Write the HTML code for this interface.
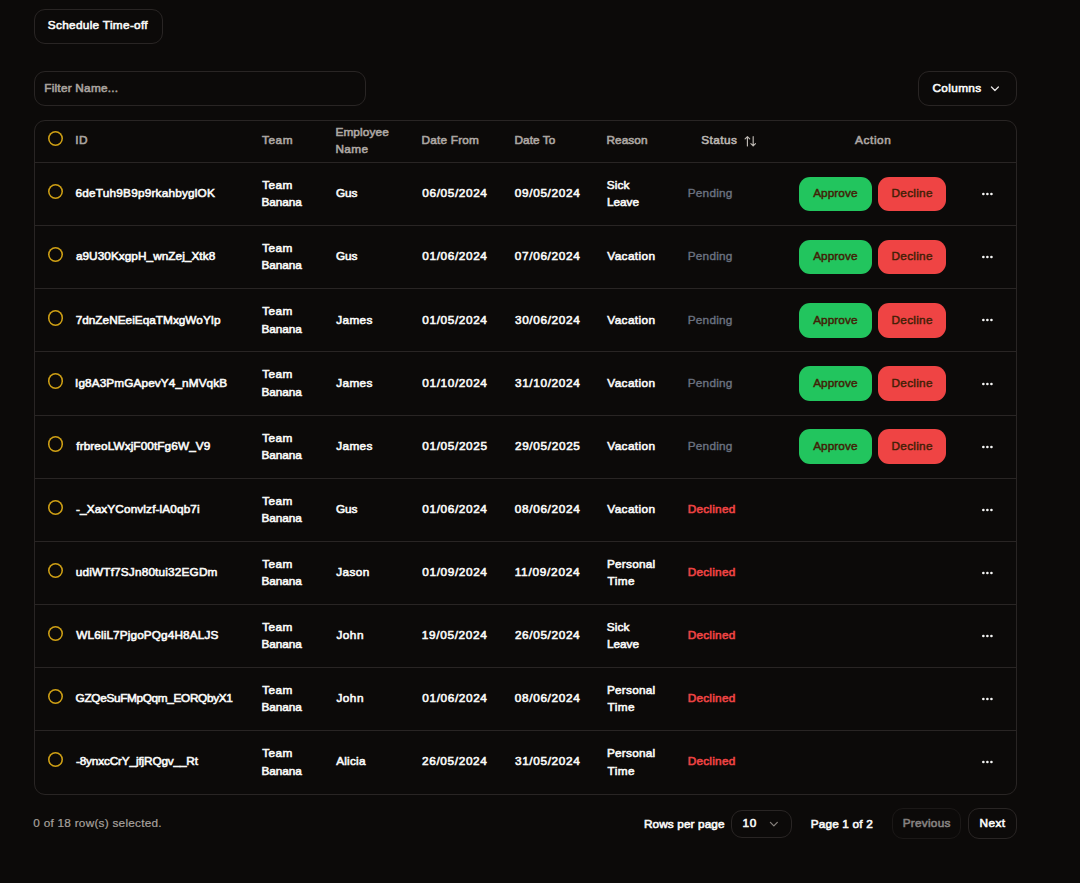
<!DOCTYPE html>
<html lang="en">
<head>
<meta charset="utf-8">
<title>Time-off requests</title>
<style>
*{box-sizing:border-box;margin:0;padding:0}
html,body{width:1080px;height:883px;overflow:hidden;background:#0c0a09}
body{position:relative;font-family:"Liberation Sans",sans-serif;font-size:11.8px;color:#fafaf9;font-weight:normal;-webkit-text-stroke:.6px currentColor}
span{white-space:nowrap}
button{font:inherit}
.btn{position:absolute;background:#0c0a09;border:1px solid #292524;border-radius:11px;color:#fafaf9;font:inherit;white-space:nowrap}
.btn>span{position:absolute;top:50%;margin-top:-.7px;transform:translateY(-50%);line-height:17px}
.sched{left:33.6px;top:8.7px;width:129.2px;height:35px}
.sched>span{left:13px;margin-top:-1.3px}
.filter{position:absolute;left:33.6px;top:70.8px;width:332.2px;height:35px;border:1px solid #292524;border-radius:11px;color:#a8a29e}
.filter>span{position:absolute;left:10px;top:50%;margin-top:.2px;transform:translateY(-50%);line-height:17px}
.cols{left:918px;top:70.8px;width:98.8px;height:35px}
.cols>span{left:13px}
.chev{position:absolute;width:13.85px;height:13.85px;fill:none;stroke:#e7e5e4;stroke-width:2.2;stroke-linecap:round;stroke-linejoin:round;top:50%;margin-top:-6.9px}
.cols .chev{left:68.6px}
.table{position:absolute;left:33.6px;top:119.7px;width:983.2px;height:674.9px;border:1px solid #292524;border-radius:11px;overflow:hidden}
.hdr{position:absolute;left:0;top:0;width:100%;height:42.3px;border-bottom:1px solid #292524;color:#ada7a3}
.hdr .c{margin-top:.1px}
.hdr .emp{margin-top:-.4px}
.row .two{margin-top:0}
.row{position:absolute;left:0;width:100%;height:63.15px;border-bottom:1px solid #292524}
.row:last-child{border-bottom-color:transparent}
.c{position:absolute;top:50%;margin-top:.25px;transform:translateY(-50%);line-height:17.3px;white-space:nowrap}
.ln{display:block}
.cb{position:absolute;left:13.1px;top:50%;margin-top:-10.1px;width:15.3px;height:15.3px;border-radius:50%;box-shadow:inset 0 0 0 1.55px #cfa015}
.hdr .cb{margin-top:-10.6px}
.id{left:41px}.team{left:226px}.emp{left:301px}.df{left:387px}.dt{left:480px}.rs{left:572px}.st{left:653px}
.sth{left:667px;color:#bab5b1}
.sort{position:absolute;left:41.8px;top:50%;margin-top:-7.1px;width:13.85px;height:13.85px;fill:none;stroke:#bdb8b3;stroke-width:2;stroke-linecap:round;stroke-linejoin:round}
.act{left:820px}
.pending{color:#6b7280;-webkit-text-stroke:.4px currentColor}
.declined{color:#ef4444}
.ab{position:absolute;top:50%;margin-top:-17.2px;height:34.4px;border-radius:11px;border:0;color:#422006;-webkit-text-stroke:.45px currentColor}
.ab>span{position:absolute;top:50%;margin-top:-.75px;transform:translateY(-50%);line-height:17px}
.ap{left:764.4px;width:72.8px;background:#22c55e}
.ap>span{left:14px}
.de{left:843.4px;width:68px;background:#ef4444}
.de>span{left:14px}
.dots{position:absolute;left:946px;top:50%;margin-top:-6.9px;width:13.85px;height:13.85px;fill:#fafaf9;stroke:#fafaf9;stroke-width:2.5}
.sel{position:absolute;left:33px;top:815px;color:#a8a29e;-webkit-text-stroke:.2px currentColor;line-height:17px}
.rpp{position:absolute;left:644px;top:815.5px;line-height:17px}
.pgsel{left:731.2px;top:810.2px;width:61px;height:27.8px}
.pgsel>span{left:11px}
.pgsel .chev{left:35px}
.chev.dim{stroke:#86817c}
.pg{position:absolute;left:811px;top:815.5px;line-height:17px}
.prev{left:892px;top:808.2px;width:69.2px;height:31.1px;color:#858180;border-color:#1b1817}
.prev>span{left:11px}
.next{left:968.2px;top:808.2px;width:48.6px;height:31.1px}
.next>span{left:11px}

</style>
</head>
<body>
<button class="btn sched"><span id="t_sched" style="letter-spacing:0.310px;margin-left:0.22px">Schedule Time-off</span></button>
<div class="filter"><span id="t_filter" style="letter-spacing:0.234px;margin-left:-0.39px">Filter Name...</span></div>
<button class="btn cols"><span id="t_cols" style="letter-spacing:0.358px;margin-left:0.46px">Columns</span><svg class="chev" viewBox="0 -1.4 24 24"><path d="m6 9 6 6 6-6"/></svg></button>
<div class="table">
<div class="hdr"><span class="cb"></span><div class="c id"><span id="h_id" style="letter-spacing:0.359px;margin-left:-0.33px">ID</span></div><div class="c team"><span id="h_team" style="letter-spacing:0.532px;margin-left:1.46px">Team</span></div><div class="c emp"><span id="h_emp1" class="ln" style="letter-spacing:0.132px;margin-left:-0.23px">Employee</span><span id="h_emp2" class="ln" style="letter-spacing:0.389px;margin-left:-0.21px">Name</span></div><div class="c df"><span id="h_df" style="letter-spacing:0.215px;margin-left:-0.11px">Date From</span></div><div class="c dt"><span id="h_dt" style="letter-spacing:0.056px;margin-left:-0.11px">Date To</span></div><div class="c rs"><span id="h_rs" style="letter-spacing:0.066px;margin-left:-0.11px">Reason</span></div><div class="c sth"><span id="h_st" style="letter-spacing:0.440px;margin-left:-0.35px">Status</span><svg class="sort" viewBox="-0.65 0 24 24"><path d="m21 16-4 4-4-4M17 20V4M3 8l4-4 4 4M7 4v16"/></svg></div><div class="c act"><span id="h_act" style="letter-spacing:0.580px;margin-left:0.51px">Action</span></div></div>
<div class="row" style="top:42.30px"><span class="cb"></span>
<div class="c id"><span id="r1_id" style="letter-spacing:0.195px;margin-left:-0.01px">6deTuh9B9p9rkahbyglOK</span></div>
<div class="c team two"><span id="r1_t1" class="ln" style="letter-spacing:0.481px;margin-left:1.56px">Team</span><span id="r1_t2" class="ln" style="letter-spacing:-0.071px;margin-left:0.81px">Banana</span></div>
<div class="c emp"><span id="r1_emp" style="letter-spacing:-0.102px;margin-left:0.30px">Gus</span></div>
<div class="c df"><span id="r1_df" style="letter-spacing:0.620px;margin-left:0.68px">06/05/2024</span></div>
<div class="c dt"><span id="r1_dt" style="letter-spacing:0.647px;margin-left:0.24px">09/05/2024</span></div>
<div class="c rs two"><span id="r1_rs0" class="ln" style="letter-spacing:0.110px;margin-left:0.24px">Sick</span><span id="r1_rs1" class="ln" style="letter-spacing:-0.035px;margin-left:0.37px">Leave</span></div>
<div class="c st pending"><span id="r1_st" style="letter-spacing:0.232px;margin-left:0.11px">Pending</span></div>
<button class="ab ap"><span id="r1_ap" style="letter-spacing:0.077px;margin-left:0.16px">Approve</span></button><button class="ab de"><span id="r1_de" style="letter-spacing:0.269px;margin-left:-0.44px">Decline</span></button>
<svg class="dots" viewBox="0.9 -0.15 24 24"><circle cx="12" cy="12" r="1"/><circle cx="19" cy="12" r="1"/><circle cx="5" cy="12" r="1"/></svg></div>
<div class="row" style="top:105.43px"><span class="cb"></span>
<div class="c id"><span id="r2_id" style="letter-spacing:0.047px;margin-left:0.31px">a9U30KxgpH_wnZej_Xtk8</span></div>
<div class="c team two"><span id="r2_t1" class="ln" style="letter-spacing:0.481px;margin-left:1.56px">Team</span><span id="r2_t2" class="ln" style="letter-spacing:-0.071px;margin-left:0.81px">Banana</span></div>
<div class="c emp"><span id="r2_emp" style="letter-spacing:-0.102px;margin-left:0.30px">Gus</span></div>
<div class="c df"><span id="r2_df" style="letter-spacing:0.620px;margin-left:0.68px">01/06/2024</span></div>
<div class="c dt"><span id="r2_dt" style="letter-spacing:0.647px;margin-left:0.24px">07/06/2024</span></div>
<div class="c rs"><span id="r2_rs0" style="letter-spacing:0.386px;margin-left:0.68px">Vacation</span></div>
<div class="c st pending"><span id="r2_st" style="letter-spacing:0.232px;margin-left:0.11px">Pending</span></div>
<button class="ab ap"><span id="r2_ap" style="letter-spacing:0.077px;margin-left:0.16px">Approve</span></button><button class="ab de"><span id="r2_de" style="letter-spacing:0.269px;margin-left:-0.44px">Decline</span></button>
<svg class="dots" viewBox="0.9 -0.15 24 24"><circle cx="12" cy="12" r="1"/><circle cx="19" cy="12" r="1"/><circle cx="5" cy="12" r="1"/></svg></div>
<div class="row" style="top:168.56px"><span class="cb"></span>
<div class="c id"><span id="r3_id" style="letter-spacing:0.015px;margin-left:0.04px">7dnZeNEeiEqaTMxgWoYIp</span></div>
<div class="c team two"><span id="r3_t1" class="ln" style="letter-spacing:0.481px;margin-left:1.56px">Team</span><span id="r3_t2" class="ln" style="letter-spacing:-0.071px;margin-left:0.81px">Banana</span></div>
<div class="c emp"><span id="r3_emp" style="letter-spacing:0.311px;margin-left:0.78px">James</span></div>
<div class="c df"><span id="r3_df" style="letter-spacing:0.620px;margin-left:0.68px">01/05/2024</span></div>
<div class="c dt"><span id="r3_dt" style="letter-spacing:0.634px;margin-left:0.36px">30/06/2024</span></div>
<div class="c rs"><span id="r3_rs0" style="letter-spacing:0.386px;margin-left:0.68px">Vacation</span></div>
<div class="c st pending"><span id="r3_st" style="letter-spacing:0.232px;margin-left:0.11px">Pending</span></div>
<button class="ab ap"><span id="r3_ap" style="letter-spacing:0.077px;margin-left:0.16px">Approve</span></button><button class="ab de"><span id="r3_de" style="letter-spacing:0.269px;margin-left:-0.44px">Decline</span></button>
<svg class="dots" viewBox="0.9 -0.15 24 24"><circle cx="12" cy="12" r="1"/><circle cx="19" cy="12" r="1"/><circle cx="5" cy="12" r="1"/></svg></div>
<div class="row" style="top:231.69px"><span class="cb"></span>
<div class="c id"><span id="r4_id" style="letter-spacing:0.095px;margin-left:-0.55px">Ig8A3PmGApevY4_nMVqkB</span></div>
<div class="c team two"><span id="r4_t1" class="ln" style="letter-spacing:0.481px;margin-left:1.56px">Team</span><span id="r4_t2" class="ln" style="letter-spacing:-0.071px;margin-left:0.81px">Banana</span></div>
<div class="c emp"><span id="r4_emp" style="letter-spacing:0.311px;margin-left:0.78px">James</span></div>
<div class="c df"><span id="r4_df" style="letter-spacing:0.620px;margin-left:0.68px">01/10/2024</span></div>
<div class="c dt"><span id="r4_dt" style="letter-spacing:0.634px;margin-left:0.36px">31/10/2024</span></div>
<div class="c rs"><span id="r4_rs0" style="letter-spacing:0.386px;margin-left:0.68px">Vacation</span></div>
<div class="c st pending"><span id="r4_st" style="letter-spacing:0.232px;margin-left:0.11px">Pending</span></div>
<button class="ab ap"><span id="r4_ap" style="letter-spacing:0.077px;margin-left:0.16px">Approve</span></button><button class="ab de"><span id="r4_de" style="letter-spacing:0.269px;margin-left:-0.44px">Decline</span></button>
<svg class="dots" viewBox="0.9 -0.15 24 24"><circle cx="12" cy="12" r="1"/><circle cx="19" cy="12" r="1"/><circle cx="5" cy="12" r="1"/></svg></div>
<div class="row" style="top:294.82px"><span class="cb"></span>
<div class="c id"><span id="r5_id" style="letter-spacing:0.089px;margin-left:0.73px">frbreoLWxjF00tFg6W_V9</span></div>
<div class="c team two"><span id="r5_t1" class="ln" style="letter-spacing:0.481px;margin-left:1.56px">Team</span><span id="r5_t2" class="ln" style="letter-spacing:-0.071px;margin-left:0.81px">Banana</span></div>
<div class="c emp"><span id="r5_emp" style="letter-spacing:0.311px;margin-left:0.78px">James</span></div>
<div class="c df"><span id="r5_df" style="letter-spacing:0.637px;margin-left:0.69px">01/05/2025</span></div>
<div class="c dt"><span id="r5_dt" style="letter-spacing:0.662px;margin-left:0.34px">29/05/2025</span></div>
<div class="c rs"><span id="r5_rs0" style="letter-spacing:0.386px;margin-left:0.68px">Vacation</span></div>
<div class="c st pending"><span id="r5_st" style="letter-spacing:0.232px;margin-left:0.11px">Pending</span></div>
<button class="ab ap"><span id="r5_ap" style="letter-spacing:0.077px;margin-left:0.16px">Approve</span></button><button class="ab de"><span id="r5_de" style="letter-spacing:0.269px;margin-left:-0.44px">Decline</span></button>
<svg class="dots" viewBox="0.9 -0.15 24 24"><circle cx="12" cy="12" r="1"/><circle cx="19" cy="12" r="1"/><circle cx="5" cy="12" r="1"/></svg></div>
<div class="row" style="top:357.95px"><span class="cb"></span>
<div class="c id"><span id="r6_id" style="letter-spacing:0.119px;margin-left:0.36px">-_XaxYConvlzf-lA0qb7i</span></div>
<div class="c team two"><span id="r6_t1" class="ln" style="letter-spacing:0.481px;margin-left:1.56px">Team</span><span id="r6_t2" class="ln" style="letter-spacing:-0.071px;margin-left:0.81px">Banana</span></div>
<div class="c emp"><span id="r6_emp" style="letter-spacing:-0.102px;margin-left:0.30px">Gus</span></div>
<div class="c df"><span id="r6_df" style="letter-spacing:0.620px;margin-left:0.68px">01/06/2024</span></div>
<div class="c dt"><span id="r6_dt" style="letter-spacing:0.647px;margin-left:0.24px">08/06/2024</span></div>
<div class="c rs"><span id="r6_rs0" style="letter-spacing:0.386px;margin-left:0.68px">Vacation</span></div>
<div class="c st declined"><span id="r6_st" style="letter-spacing:0.247px;margin-left:0.04px">Declined</span></div>
<svg class="dots" viewBox="0.9 -0.15 24 24"><circle cx="12" cy="12" r="1"/><circle cx="19" cy="12" r="1"/><circle cx="5" cy="12" r="1"/></svg></div>
<div class="row" style="top:421.08px"><span class="cb"></span>
<div class="c id"><span id="r7_id" style="letter-spacing:0.165px;margin-left:0.17px">udiWTf7SJn80tui32EGDm</span></div>
<div class="c team two"><span id="r7_t1" class="ln" style="letter-spacing:0.481px;margin-left:1.56px">Team</span><span id="r7_t2" class="ln" style="letter-spacing:-0.071px;margin-left:0.81px">Banana</span></div>
<div class="c emp"><span id="r7_emp" style="letter-spacing:0.341px;margin-left:0.78px">Jason</span></div>
<div class="c df"><span id="r7_df" style="letter-spacing:0.620px;margin-left:0.68px">01/09/2024</span></div>
<div class="c dt"><span id="r7_dt" style="letter-spacing:0.753px;margin-left:0.07px">11/09/2024</span></div>
<div class="c rs two"><span id="r7_rs0" class="ln" style="letter-spacing:0.242px;margin-left:0.37px">Personal</span><span id="r7_rs1" class="ln" style="letter-spacing:0.365px;margin-left:1.00px">Time</span></div>
<div class="c st declined"><span id="r7_st" style="letter-spacing:0.247px;margin-left:0.04px">Declined</span></div>
<svg class="dots" viewBox="0.9 -0.15 24 24"><circle cx="12" cy="12" r="1"/><circle cx="19" cy="12" r="1"/><circle cx="5" cy="12" r="1"/></svg></div>
<div class="row" style="top:484.21px"><span class="cb"></span>
<div class="c id"><span id="r8_id" style="letter-spacing:0.114px;margin-left:0.75px">WL6liL7PjgoPQg4H8ALJS</span></div>
<div class="c team two"><span id="r8_t1" class="ln" style="letter-spacing:0.481px;margin-left:1.56px">Team</span><span id="r8_t2" class="ln" style="letter-spacing:-0.071px;margin-left:0.81px">Banana</span></div>
<div class="c emp"><span id="r8_emp" style="letter-spacing:0.494px;margin-left:0.79px">John</span></div>
<div class="c df"><span id="r8_df" style="letter-spacing:0.677px;margin-left:0.17px">19/05/2024</span></div>
<div class="c dt"><span id="r8_dt" style="letter-spacing:0.635px;margin-left:0.34px">26/05/2024</span></div>
<div class="c rs two"><span id="r8_rs0" class="ln" style="letter-spacing:0.110px;margin-left:0.24px">Sick</span><span id="r8_rs1" class="ln" style="letter-spacing:-0.035px;margin-left:0.37px">Leave</span></div>
<div class="c st declined"><span id="r8_st" style="letter-spacing:0.247px;margin-left:0.04px">Declined</span></div>
<svg class="dots" viewBox="0.9 -0.15 24 24"><circle cx="12" cy="12" r="1"/><circle cx="19" cy="12" r="1"/><circle cx="5" cy="12" r="1"/></svg></div>
<div class="row" style="top:547.34px"><span class="cb"></span>
<div class="c id"><span id="r9_id" style="letter-spacing:-0.332px;margin-left:-0.00px">GZQeSuFMpQqm_EORQbyX1</span></div>
<div class="c team two"><span id="r9_t1" class="ln" style="letter-spacing:0.481px;margin-left:1.56px">Team</span><span id="r9_t2" class="ln" style="letter-spacing:-0.071px;margin-left:0.81px">Banana</span></div>
<div class="c emp"><span id="r9_emp" style="letter-spacing:0.494px;margin-left:0.79px">John</span></div>
<div class="c df"><span id="r9_df" style="letter-spacing:0.620px;margin-left:0.68px">01/06/2024</span></div>
<div class="c dt"><span id="r9_dt" style="letter-spacing:0.647px;margin-left:0.24px">08/06/2024</span></div>
<div class="c rs two"><span id="r9_rs0" class="ln" style="letter-spacing:0.242px;margin-left:0.37px">Personal</span><span id="r9_rs1" class="ln" style="letter-spacing:0.365px;margin-left:1.00px">Time</span></div>
<div class="c st declined"><span id="r9_st" style="letter-spacing:0.247px;margin-left:0.04px">Declined</span></div>
<svg class="dots" viewBox="0.9 -0.15 24 24"><circle cx="12" cy="12" r="1"/><circle cx="19" cy="12" r="1"/><circle cx="5" cy="12" r="1"/></svg></div>
<div class="row" style="top:610.47px"><span class="cb"></span>
<div class="c id"><span id="r10_id" style="letter-spacing:-0.159px;margin-left:0.36px">-8ynxcCrY_jfjRQgv__Rt</span></div>
<div class="c team two"><span id="r10_t1" class="ln" style="letter-spacing:0.481px;margin-left:1.56px">Team</span><span id="r10_t2" class="ln" style="letter-spacing:-0.071px;margin-left:0.81px">Banana</span></div>
<div class="c emp"><span id="r10_emp" style="letter-spacing:0.224px;margin-left:0.59px">Alicia</span></div>
<div class="c df"><span id="r10_df" style="letter-spacing:0.648px;margin-left:0.43px">26/05/2024</span></div>
<div class="c dt"><span id="r10_dt" style="letter-spacing:0.634px;margin-left:0.36px">31/05/2024</span></div>
<div class="c rs two"><span id="r10_rs0" class="ln" style="letter-spacing:0.242px;margin-left:0.37px">Personal</span><span id="r10_rs1" class="ln" style="letter-spacing:0.365px;margin-left:1.00px">Time</span></div>
<div class="c st declined"><span id="r10_st" style="letter-spacing:0.247px;margin-left:0.04px">Declined</span></div>
<svg class="dots" viewBox="0.9 -0.15 24 24"><circle cx="12" cy="12" r="1"/><circle cx="19" cy="12" r="1"/><circle cx="5" cy="12" r="1"/></svg></div>
</div>
<div class="sel"><span id="t_sel" style="letter-spacing:0.248px;margin-left:0.32px">0 of 18 row(s) selected.</span></div>
<div class="rpp"><span id="t_rpp" style="letter-spacing:0.110px;margin-left:-0.12px">Rows per page</span></div>
<div class="btn pgsel"><span id="t_10" style="letter-spacing:0.745px;margin-left:-0.75px">10</span><svg class="chev dim" viewBox="0.1 -0.3 24 24"><path d="m6 9 6 6 6-6"/></svg></div>
<div class="pg"><span id="t_pg" style="letter-spacing:0.181px;margin-left:-0.38px">Page 1 of 2</span></div>
<button class="btn prev"><span id="t_prev" style="letter-spacing:0.270px;margin-left:-1.36px">Previous</span></button><button class="btn next"><span id="t_next" style="letter-spacing:0.474px;margin-left:-0.72px">Next</span></button>
</body>
</html>
